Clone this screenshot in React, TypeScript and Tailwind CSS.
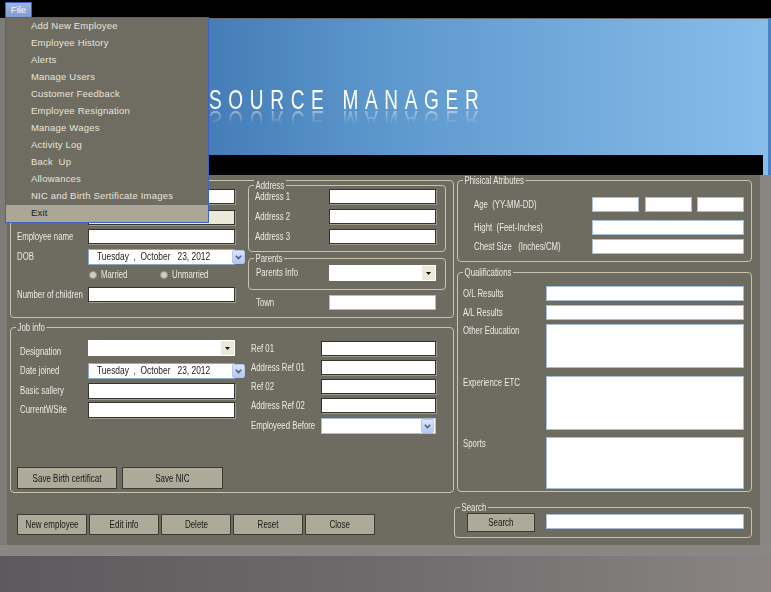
import React from 'react'

const menuItems = [
  'Add New Employee',
  'Employee History',
  'Alerts',
  'Manage Users',
  'Customer Feedback',
  'Employee Resignation',
  'Manage Wages',
  'Activity Log',
  'Back  Up',
  'Allowances',
  'NIC and Birth Sertificate Images',
  'Exit',
]

function Group({ legend, className, children }: { legend?: string; className?: string; children?: React.ReactNode }) {
  return (
    <div className={`relative rounded-[4px] border border-[#c8c4b0] ${className ?? ''}`}>
      {legend && (
        <span className="absolute -top-[6px] left-[5px] origin-left scale-x-[0.78] whitespace-pre bg-[#6e6b60] px-[2px] text-[10px] leading-[11px] text-[#ecebe3]">
          {legend}
        </span>
      )}
      {children}
    </div>
  )
}

// sunken textbox (dark edge)
function DarkBox({ className }: { className?: string }) {
  return <div className={`h-[15px] border border-[#34342f] bg-white shadow-[1px_1px_0_#9d9a8c] ${className ?? ''}`} />
}

// flat xp textbox (blue edge)
function BlueBox({ className }: { className?: string }) {
  return <div className={`border border-[#a7bcd6] bg-white ${className ?? ''}`} />
}

function XpArrow() {
  return (
    <div className="flex h-[14px] w-[13px] shrink-0 items-center justify-center rounded-[2px] border border-[#b5c7f0] bg-gradient-to-b from-[#dbe5fb] to-[#b3c8f4]">
      <svg width="7" height="5" viewBox="0 0 7 5">
        <path d="M0.8 0.8 L3.5 3.6 L6.2 0.8" fill="none" stroke="#4d6185" strokeWidth="1.6" />
      </svg>
    </div>
  )
}

function DatePicker({ className }: { className?: string }) {
  return (
    <div className={`flex h-[16px] items-center justify-between border border-[#8aa6c8] bg-white pl-[8px] pr-[1px] ${className ?? ''}`}>
      <span className="inline-block origin-left scale-x-[0.84] whitespace-pre text-[10px] leading-none text-[#1b1b1b]">
        {'Tuesday  ,  October   23, 2012'}
      </span>
      <XpArrow />
    </div>
  )
}

function Combo({ className, xp }: { className?: string; xp?: boolean }) {
  if (xp) {
    return (
      <div className={`flex h-[16px] items-center justify-end border border-[#a7bcd6] bg-white pr-[1px] ${className ?? ''}`}>
        <XpArrow />
      </div>
    )
  }
  return (
    <div className={`flex h-[16px] items-center justify-end bg-white pr-[1px] ${className ?? ''}`}>
      <div className="flex h-[14px] w-[13px] items-center justify-center bg-[#ece9d8]">
        <svg width="5" height="3" viewBox="0 0 5 3">
          <path d="M0 0 H5 L2.5 3 Z" fill="#111" />
        </svg>
      </div>
    </div>
  )
}

// form labels are a narrow face, so squeeze the sans a little
function Label({ children, className }: { children?: React.ReactNode; className?: string }) {
  return (
    <div className={`shrink-0 text-[10px] leading-[12px] text-[#ecebe3] ${className ?? ''}`}>
      <span className="inline-block origin-left scale-x-[0.78] whitespace-pre">{children}</span>
    </div>
  )
}

function Btn({ children, className }: { children: React.ReactNode; className?: string }) {
  return (
    <button className={`flex items-center justify-center border border-[#3a3a34] bg-[#aeaa9a] text-[10px] text-[#161616] ${className ?? ''}`}>
      <span className="inline-block scale-x-[0.8] whitespace-pre">{children}</span>
    </button>
  )
}

function Radio({ label }: { label: string }) {
  return (
    <div className="flex items-center gap-[4px]">
      <span className="h-[8px] w-[8px] shrink-0 rounded-full border border-[#98968c] bg-[#cfcec6]" />
      <Label>{label}</Label>
    </div>
  )
}

export default function App() {
  return (
    <div className="relative flex h-[592px] w-[771px] flex-col overflow-hidden bg-[#878683] font-['Liberation_Sans',sans-serif]">
      {/* menu bar */}
      <div className="h-[18px] shrink-0 bg-black pl-[5px] pt-[2px]">
        <div className="flex h-[16px] w-[27px] items-start justify-center border border-b-0 border-[#3d62c2] bg-gradient-to-b from-[#9bb6e4] to-[#7d9ad4] pt-[1px] text-[9.5px] leading-[12px] text-[#f4f6fb]">
          File
        </div>
      </div>

      <div className="flex h-[527px] shrink-0">
        <div className="w-[7px] shrink-0 bg-[#7d7c78]" />
        <div className="flex w-[764px] flex-col">
          {/* banner */}
          <div className="flex h-[157px] flex-col border-t border-r-[3px] border-t-[#6d6d6a] border-r-[#4d82c2] bg-gradient-to-r from-[#2a5f9f] via-[#5d98cd] to-[#88bdea]">
            <div className="h-[136px] overflow-hidden pl-[202px] pt-[67px] text-white">
              <div className="origin-left scale-x-[0.68] whitespace-pre text-[28px] leading-[28px] tracking-[9.8px]">{'SOURCE MANAGER'}</div>
              <div
                aria-hidden
                className="-mt-[8px] origin-left -scale-y-100 scale-x-[0.68] whitespace-pre text-[28px] leading-[28px] tracking-[9.8px] text-white/60 [mask-image:linear-gradient(to_bottom,transparent_35%,black)]"
              >
                {'SOURCE MANAGER'}
              </div>
            </div>
            <div className="h-[20px] w-[756px] bg-black" />
          </div>

          {/* form panel */}
          <div className="flex h-[370px] w-[753px] bg-[#6e6b60] pl-[3px]">
            {/* left column */}
            <div className="flex w-[444px] flex-col pt-[5px]">
              {/* personal group, its caption sits under the open menu */}
              <Group className="flex h-[138px] w-[444px]">
                <div className="flex w-[237px] flex-col pl-[6px] pt-[8px]">
                  <div className="flex h-[15px] items-center">
                    <Label className="w-[71px]" />
                    <DarkBox className="w-[147px]" />
                  </div>
                  <div className="mt-[6px] flex h-[15px] items-center">
                    <Label className="w-[71px]" />
                    <div className="h-[15px] w-[147px] border border-[#34342f] bg-[#ece9d8] shadow-[1px_1px_0_#9d9a8c]" />
                  </div>
                  <div className="mt-[4px] flex h-[15px] items-center">
                    <Label className="w-[71px]">Employee name</Label>
                    <DarkBox className="w-[147px]" />
                  </div>
                  <div className="mt-[5px] flex h-[16px] items-center">
                    <Label className="w-[71px]">DOB</Label>
                    <DatePicker className="w-[147px]" />
                  </div>
                  <div className="mt-[4px] flex h-[12px] items-center pl-[72px]">
                    <div className="w-[71px]">
                      <Radio label="Married" />
                    </div>
                    <Radio label="Unmarried" />
                  </div>
                  <div className="mt-[6px] flex h-[15px] items-center">
                    <Label className="w-[71px]">Number of children</Label>
                    <DarkBox className="w-[147px]" />
                  </div>
                </div>

                <div className="flex w-[198px] flex-col pt-[4px]">
                  <Group legend="Address" className="flex h-[67px] flex-col gap-[5px] pl-[6px] pt-[3px]">
                    {['Address 1', 'Address 2', 'Address 3'].map((a) => (
                      <div key={a} className="flex h-[15px] items-center">
                        <Label className="w-[74px]">{a}</Label>
                        <DarkBox className="w-[107px]" />
                      </div>
                    ))}
                  </Group>
                  <Group legend="Parents" className="mt-[6px] h-[32px] pl-[7px] pt-[6px]">
                    <div className="flex h-[16px] items-center">
                      <Label className="w-[73px]">Parents Info</Label>
                      <Combo className="w-[107px]" />
                    </div>
                  </Group>
                  <div className="mt-[5px] flex h-[15px] items-center pl-[8px]">
                    <Label className="w-[73px]">Town</Label>
                    <BlueBox className="h-[15px] w-[107px]" />
                  </div>
                </div>
              </Group>

              <Group legend="Job info" className="mt-[9px] flex h-[166px] w-[444px]">
                <div className="flex w-[237px] flex-col pl-[9px] pt-[12px]">
                  <div className="flex h-[16px] items-center">
                    <Label className="w-[68px] translate-y-[4px]">Designation</Label>
                    <Combo className="w-[147px]" />
                  </div>
                  <div className="mt-[7px] flex h-[16px] items-center">
                    <Label className="w-[68px]">Date joined</Label>
                    <DatePicker className="w-[147px]" />
                  </div>
                  <div className="mt-[4px] flex h-[16px] items-center">
                    <Label className="w-[68px]">Basic sallery</Label>
                    <DarkBox className="h-[16px] w-[147px]" />
                  </div>
                  <div className="mt-[3px] flex h-[16px] items-center">
                    <Label className="w-[68px]">CurrentWSite</Label>
                    <DarkBox className="h-[16px] w-[147px]" />
                  </div>
                  <div className="-ml-[3px] mt-[49px] flex gap-[5px]">
                    <Btn className="h-[22px] w-[100px]">Save Birth certificat</Btn>
                    <Btn className="h-[22px] w-[101px]">Save NIC</Btn>
                  </div>
                </div>
                <div className="flex w-[198px] flex-col pl-[3px] pt-[13px]">
                  <div className="flex h-[15px] items-center">
                    <Label className="w-[70px]">Ref 01</Label>
                    <DarkBox className="w-[115px]" />
                  </div>
                  <div className="mt-[4px] flex h-[15px] items-center">
                    <Label className="w-[70px]">Address Ref 01</Label>
                    <DarkBox className="w-[115px]" />
                  </div>
                  <div className="mt-[4px] flex h-[15px] items-center">
                    <Label className="w-[70px]">Ref 02</Label>
                    <DarkBox className="w-[115px]" />
                  </div>
                  <div className="mt-[4px] flex h-[15px] items-center">
                    <Label className="w-[70px]">Address Ref 02</Label>
                    <DarkBox className="w-[115px]" />
                  </div>
                  <div className="mt-[5px] flex h-[16px] items-center">
                    <Label className="w-[70px]">Employeed Before</Label>
                    <Combo xp className="w-[115px]" />
                  </div>
                </div>
              </Group>

              <div className="mt-[21px] flex gap-[2px] pl-[7px]">
                {['New employee', 'Edit info', 'Delete', 'Reset', 'Close'].map((b) => (
                  <Btn key={b} className="h-[21px] w-[70px]">{b}</Btn>
                ))}
              </div>
            </div>

            {/* right column */}
            <div className="ml-[3px] flex w-[295px] flex-col pt-[5px]">
              <Group legend="Phisical Atributes" className="h-[82px] pl-[16px] pt-[16px]">
                <div className="flex h-[15px] items-center">
                  <Label className="w-[118px]">{'Age  (YY-MM-DD)'}</Label>
                  <BlueBox className="h-[15px] w-[47px]" />
                  <BlueBox className="ml-[6px] h-[15px] w-[47px]" />
                  <BlueBox className="ml-[5px] h-[15px] w-[47px]" />
                </div>
                <div className="mt-[8px] flex h-[15px] items-center">
                  <Label className="w-[118px]">{'Hight  (Feet-Inches)'}</Label>
                  <BlueBox className="h-[15px] w-[152px]" />
                </div>
                <div className="mt-[4px] flex h-[15px] items-center">
                  <Label className="w-[118px]">{'Chest Size   (Inches/CM)'}</Label>
                  <BlueBox className="h-[15px] w-[152px]" />
                </div>
              </Group>

              <Group legend="Qualifications" className="mt-[10px] h-[220px] pl-[5px] pt-[13px]">
                <div className="flex h-[15px] items-center">
                  <Label className="w-[83px]">O/L Results</Label>
                  <BlueBox className="h-[15px] w-[198px]" />
                </div>
                <div className="mt-[4px] flex h-[15px] items-center">
                  <Label className="w-[83px]">A/L Results</Label>
                  <BlueBox className="h-[15px] w-[198px]" />
                </div>
                <div className="mt-[4px] flex">
                  <Label className="w-[83px] pt-[1px]">Other Education</Label>
                  <BlueBox className="h-[44px] w-[198px]" />
                </div>
                <div className="mt-[8px] flex">
                  <Label className="w-[83px] pt-[1px]">Experience ETC</Label>
                  <BlueBox className="h-[54px] w-[198px]" />
                </div>
                <div className="mt-[7px] flex">
                  <Label className="w-[83px] pt-[1px]">Sports</Label>
                  <BlueBox className="h-[52px] w-[198px]" />
                </div>
              </Group>

              <Group legend="Search" className="-ml-[3px] mt-[15px] flex h-[31px] w-[298px] items-start pl-[12px] pt-[5px]">
                <Btn className="h-[19px] w-[68px] border-[#2e2e29]">Search</Btn>
                <BlueBox className="ml-[11px] mt-[1px] h-[15px] w-[198px]" />
              </Group>
            </div>
          </div>
        </div>
      </div>

      <div className="h-[11px] shrink-0 bg-[#888784]" />
      <div className="flex-1 bg-gradient-to-r from-[#5c5a5d] via-[#6f6b6c] to-[#8a8584]" />

      {/* open File menu */}
      <div className="absolute left-[5px] top-[17px] w-[204px] border border-[#3d62c2] bg-[#6f6c62]">
        {menuItems.map((m) => (
          <div
            key={m}
            className={`flex h-[17px] items-center whitespace-pre pl-[25px] text-[9.5px] tracking-[0.2px] ${
              m === 'Exit' ? 'bg-[#aba797] text-[#1c1c1c]' : 'text-[#e8e5da]'
            }`}
          >
            {m}
          </div>
        ))}
      </div>
    </div>
  )
}
